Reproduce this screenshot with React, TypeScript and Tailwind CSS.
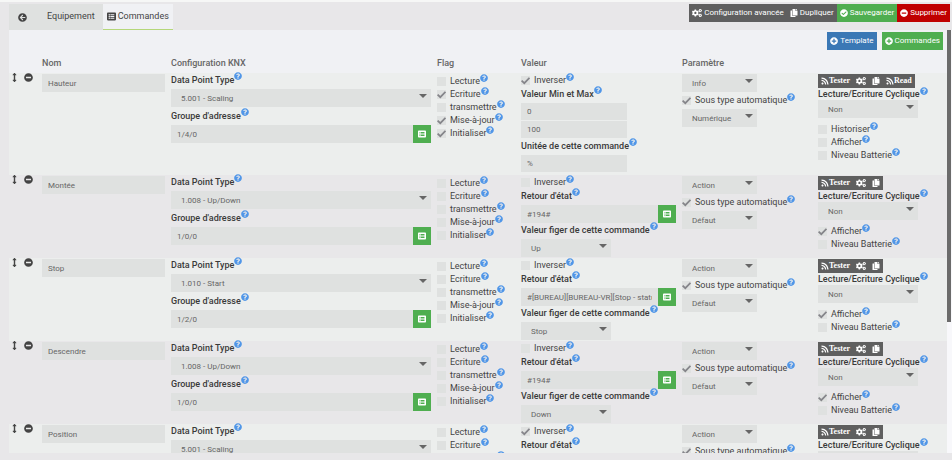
import { useId, type ReactNode } from "react";
import {
  FaArrowCircleLeft,
  FaArrowsAltV,
  FaCheckCircle,
  FaCogs,
  FaCopy,
  FaListAlt,
  FaMinusCircle,
  FaPlusCircle,
  FaQuestionCircle,
  FaRss,
} from "react-icons/fa";

type Command = {
  name: string;
  dataPoint: string;
  address: string;
  flags: string[];
  inverted: boolean;
  kind: "Info" | "Action";
  subType: string;
  feedback?: string;
  fixedValue?: string;
  visible: boolean;
};

const FLAGS = ["Lecture", "Ecriture", "transmettre", "Mise-à-jour", "Initialiser"];

const COMMANDS: Command[] = [
  { name: "Hauteur", dataPoint: "5.001 - Scaling", address: "1/4/0", flags: ["Ecriture", "Mise-à-jour", "Initialiser"], inverted: true, kind: "Info", subType: "Numérique", visible: false },
  { name: "Montée", dataPoint: "1.008 - Up/Down", address: "1/0/0", flags: [], inverted: false, kind: "Action", subType: "Défaut", feedback: "#194#", fixedValue: "Up", visible: true },
  { name: "Stop", dataPoint: "1.010 - Start", address: "1/2/0", flags: [], inverted: false, kind: "Action", subType: "Défaut", feedback: "#[BUREAU][BUREAU-VR][Stop - status]#", fixedValue: "Stop", visible: true },
  { name: "Descendre", dataPoint: "1.008 - Up/Down", address: "1/0/0", flags: [], inverted: false, kind: "Action", subType: "Défaut", feedback: "#194#", fixedValue: "Down", visible: true },
  { name: "Position", dataPoint: "5.001 - Scaling", address: "1/4/0", flags: [], inverted: true, kind: "Action", subType: "Défaut", feedback: "#194#", fixedValue: "", visible: true },
];

function Help() {
  return <FaQuestionCircle className="-mt-px size-2 shrink-0 text-[#5096e8]" aria-hidden />;
}

function FieldLabel({ htmlFor, children, tight }: { htmlFor: string; children: ReactNode; tight?: boolean }) {
  return (
    <label
      htmlFor={htmlFor}
      className={`flex items-start font-medium whitespace-nowrap text-[#3a3a3a] ${tight ? "h-3 leading-[12px]" : "h-4 leading-[14px]"}`}
    >
      {children}
      <Help />
    </label>
  );
}

function Check({ label, checked }: { label: string; checked: boolean }) {
  return (
    <label className="flex h-[13px] items-start leading-[13px] whitespace-nowrap text-[#444]">
      <span className="mt-[2px] mr-1 grid size-[9px] shrink-0">
        <input
          type="checkbox"
          defaultChecked={checked}
          className="peer col-start-1 row-start-1 size-[9px] appearance-none bg-[#dfe1e0]"
        />
        <svg
          viewBox="0 0 9 9"
          className="pointer-events-none invisible col-start-1 row-start-1 size-[9px] peer-checked:visible"
          fill="none"
          stroke="#85858a"
          strokeWidth="1.8"
          aria-hidden
        >
          <path d="M0.6 4.6 3.3 7.2 8.5 1.8" />
        </svg>
      </span>
      {label}
      <Help />
    </label>
  );
}

function TextField({ id, value, label, className }: { id?: string; value: string; label?: string; className: string }) {
  return (
    <input
      id={id}
      type="text"
      aria-label={label}
      defaultValue={value}
      className={`block min-w-0 bg-[#dfe1e0] px-[6px] text-[8px] text-[#666] outline-none ${className}`}
    />
  );
}

function Select({ id, value, label, className }: { id?: string; value: string; label?: string; className: string }) {
  return (
    <div className={`grid ${className}`}>
      <select
        id={id}
        aria-label={label}
        defaultValue={value}
        className="col-start-1 row-start-1 h-[18px] w-full appearance-none bg-[#dfe1e0] px-[10px] pt-px text-[8px] text-[#666] outline-none"
      >
        <option>{value}</option>
      </select>
      <svg
        viewBox="0 0 8 4"
        className="pointer-events-none col-start-1 row-start-1 mt-[5px] mr-1 h-1 w-2 justify-self-end fill-[#666]"
        aria-hidden
      >
        <path d="M0 0h8L4 4z" />
      </svg>
    </div>
  );
}

function PickedField({ id, value }: { id: string; value: string }) {
  return (
    <div className="flex">
      <TextField id={id} value={value} className="h-[18px] flex-1" />
      <button type="button" aria-label="Choisir" className="grid size-[18px] place-items-center bg-[#4fae50] text-white">
        <FaListAlt className="size-2" />
      </button>
    </div>
  );
}

function CommandRow({ command }: { command: Command }) {
  const id = useId();
  const isInfo = command.kind === "Info";
  return (
    <tr className="align-top odd:bg-[#eceeed] even:bg-[#e8e7e9]">
      <td className={isInfo ? "h-[102px]" : "h-[83px]"}>
        <div className="-ml-[2px] flex items-center text-[#444]">
          <span className="grid h-[9px] w-2 place-items-center">
            <FaArrowsAltV className="size-[9px]" />
          </span>
          <button type="button" aria-label="Retirer" className="ml-[6px]">
            <FaMinusCircle className="size-[9px]" />
          </button>
        </div>
      </td>
      <td className="pt-px">
        <TextField value={command.name} label="Nom" className="h-[18px] w-full" />
      </td>
      <td>
        <FieldLabel htmlFor={`${id}dpt`}>Data Point Type</FieldLabel>
        <Select id={`${id}dpt`} value={command.dataPoint} className="mb-[2px]" />
        <FieldLabel htmlFor={`${id}addr`}>Groupe d'adresse</FieldLabel>
        <PickedField id={`${id}addr`} value={command.address} />
      </td>
      <td className="pt-[2px]">
        {FLAGS.map((flag) => (
          <Check key={flag} label={flag} checked={command.flags.includes(flag)} />
        ))}
      </td>
      <td className="pt-px">
        <Check label="Inverser" checked={command.inverted} />
        {isInfo ? (
          <>
            <FieldLabel htmlFor={`${id}min`}>Valeur Min et Max</FieldLabel>
            <TextField id={`${id}min`} value="0" className="mb-px h-[17px] w-[106px]" />
            <TextField value="100" label="Valeur Max" className="mb-px h-[17px] w-[106px]" />
            <FieldLabel htmlFor={`${id}unit`}>Unitée de cette commande</FieldLabel>
            <TextField id={`${id}unit`} value="%" className="h-[17px] w-[106px]" />
          </>
        ) : (
          <>
            <FieldLabel htmlFor={`${id}state`}>Retour d'état</FieldLabel>
            <PickedField id={`${id}state`} value={command.feedback ?? ""} />
            <FieldLabel htmlFor={`${id}fixed`}>Valeur figer de cette commande</FieldLabel>
            <Select id={`${id}fixed`} value={command.fixedValue ?? ""} className="w-[90px]" />
          </>
        )}
      </td>
      <td className="pt-px">
        <div className="flex flex-col gap-[2px]">
          <Select value={command.kind} label="Type" className="w-[75px]" />
          <Check label="Sous type automatique" checked />
          <Select value={command.subType} label="Sous type" className="w-[75px]" />
        </div>
      </td>
      <td className="pt-px">
        <div className="flex h-[14px] w-max bg-[#5f5f5f] font-['Liberation_Serif',serif] text-[8px] font-bold text-white">
          <button type="button" className="flex items-center px-[3px]">
            <FaRss className="size-2" />
            Tester
          </button>
          <button type="button" aria-label="Configurer" className="px-[3px]">
            <FaCogs className="size-[10px]" />
          </button>
          <button type="button" aria-label="Copier" className="px-[3px]">
            <FaCopy className="size-2" />
          </button>
          {isInfo && (
            <button type="button" className="flex items-center px-[3px]">
              <FaRss className="size-2" />
              Read
            </button>
          )}
        </div>
        <FieldLabel htmlFor={`${id}cycle`} tight>
          Lecture/Ecriture Cyclique
        </FieldLabel>
        <Select id={`${id}cycle`} value="Non" className="mb-[5px] w-[100px]" />
        {isInfo && <Check label="Historiser" checked={false} />}
        <Check label="Afficher" checked={command.visible} />
        <Check label="Niveau Batterie" checked={false} />
      </td>
    </tr>
  );
}

function ActionButton({ icon, children, className }: { icon: ReactNode; children: ReactNode; className: string }) {
  return (
    <button type="button" className={`flex h-[18px] items-center gap-[2px] text-[8px] text-white ${className}`}>
      {icon}
      {children}
    </button>
  );
}

export default function App() {
  return (
    <div className="flex h-screen flex-col overflow-hidden border-t-2 border-[#f6f7f6] bg-[#e8e7e9] pb-[7px] pl-[9px] font-[Roboto,sans-serif] text-[9px] text-[#444]">
      <header className="flex shrink-0 items-start justify-between pt-[2px] pr-[2px]">
        <nav className="flex h-[26px]">
          <a href="#retour" aria-label="Retour" className="flex items-center bg-[#dfe1e0] px-[9px]">
            <FaArrowCircleLeft className="size-[9px]" />
          </a>
          <a href="#equipement" className="flex items-center bg-[#dfe1e0] pr-2 pl-[11px]">
            Equipement
          </a>
          <a
            href="#commandes"
            className="flex items-center gap-[2px] border-b border-[#b5d77a] bg-[#f0f1f4] px-1"
          >
            <FaListAlt className="size-[9px]" />
            Commandes
          </a>
        </nav>
        <div className="flex">
          <ActionButton icon={<FaCogs className="size-[10px]" />} className="bg-[#5f5f5f] px-[3px]">
            Configuration avancée
          </ActionButton>
          <ActionButton icon={<FaCopy className="size-2" />} className="bg-[#5f5f5f] px-[3px]">
            Dupliquer
          </ActionButton>
          <ActionButton icon={<FaCheckCircle className="size-2" />} className="bg-[#4fae50] px-[3px]">
            Sauvegarder
          </ActionButton>
          <ActionButton icon={<FaMinusCircle className="size-2" />} className="bg-[#c00000] px-[3px]">
            Supprimer
          </ActionButton>
        </div>
      </header>

      <div className="flex min-h-0 flex-1">
        <main className="min-w-0 flex-1 overflow-hidden bg-[#f0f1f4]">
          <div className="flex justify-end gap-[5px] pt-[2px] pr-1">
            <ActionButton icon={<FaPlusCircle className="size-2" />} className="bg-[#3a78b5] px-[3px]">
              Template
            </ActionButton>
            <ActionButton icon={<FaPlusCircle className="size-2" />} className="bg-[#4fae50] px-[3px]">
              Commandes
            </ActionButton>
          </div>
          <table className="mt-[6px] w-full table-fixed [&_td]:px-[3px] [&_th]:px-[3px]">
            <colgroup>
              <col className="w-[30px]" />
              <col className="w-[129px]" />
              <col />
              <col className="w-[84px]" />
              <col className="w-[161px]" />
              <col className="w-[136px]" />
              <col className="w-[132px]" />
            </colgroup>
            <thead>
              <tr className="h-[17px] text-left align-top leading-[14px] text-[#666] [&_th]:font-medium">
                <th />
                <th>Nom</th>
                <th>Configuration KNX</th>
                <th>Flag</th>
                <th>Valeur</th>
                <th>Paramètre</th>
                <th />
              </tr>
            </thead>
            <tbody>
              {COMMANDS.map((command) => (
                <CommandRow key={command.name} command={command} />
              ))}
            </tbody>
          </table>
        </main>
        <div className="w-[5px] bg-[#f8f8fb]" aria-hidden>
          <div className="h-[69%] w-1 bg-[#6b6b6b]" />
        </div>
      </div>
    </div>
  );
}
